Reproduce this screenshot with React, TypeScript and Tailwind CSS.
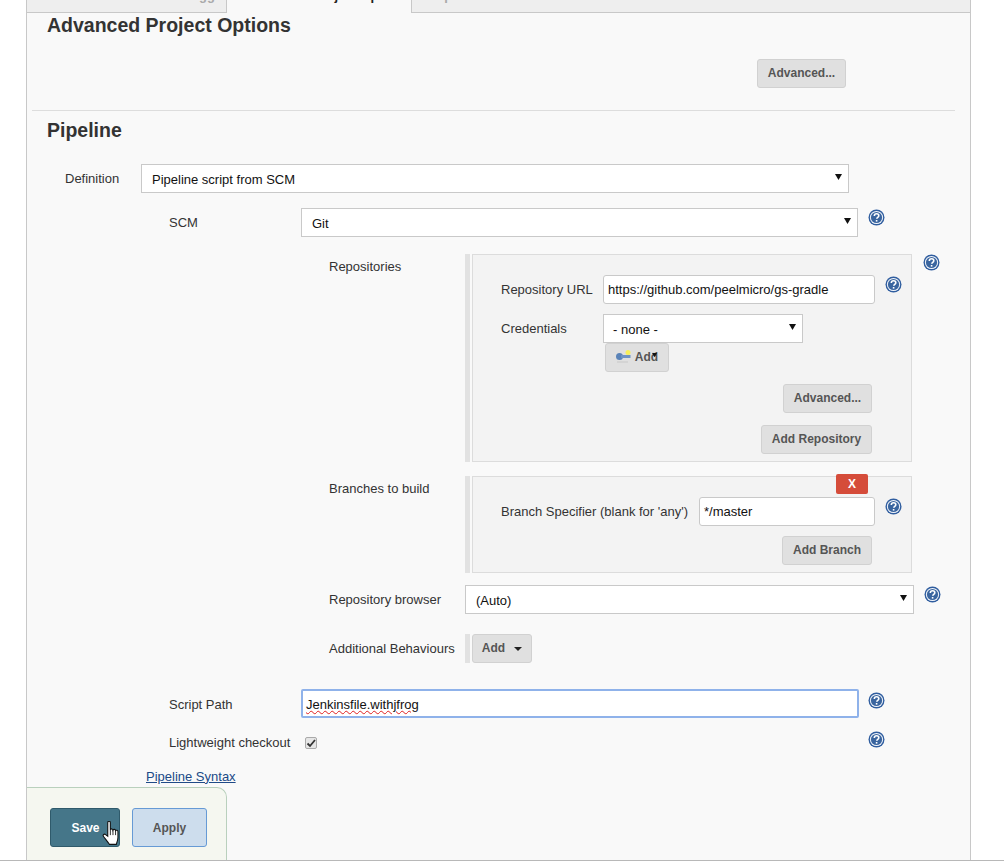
import type { ReactNode } from "react";

function Help() {
  return (
    <svg width="17" height="17" viewBox="0 0 17 17" aria-hidden className="shrink-0">
      <circle cx="8.5" cy="8.5" r="8" fill="#2f5d9f" />
      <circle cx="8.5" cy="8.5" r="6.6" fill="#f4f7fb" />
      <circle cx="8.5" cy="8.5" r="5.6" fill="#3a659f" />
      <path d="M6.3 6.9c0-1.3 1-2.1 2.3-2.1s2.2.8 2.2 1.9c0 1.7-2 1.7-2 3.1" fill="none" stroke="#fff" strokeWidth="1.6" />
      <rect x="7.8" y="11" width="1.6" height="1.6" fill="#fff" />
    </svg>
  );
}

function Caret() {
  return (
    <svg width="7" height="6" viewBox="0 0 7 6" aria-hidden className="shrink-0">
      <path d="M0 0h7L3.5 6z" fill="#111" />
    </svg>
  );
}

function Btn({ children, className = "" }: { children: ReactNode; className?: string }) {
  return (
    <div
      className={`flex h-[29px] items-center justify-center rounded-[3px] border border-[#d1d1d1] bg-[#e0e0e0] pb-[2px] text-[12px] font-bold text-[#555] ${className}`}
    >
      {children}
    </div>
  );
}

function Select({ label, className = "" }: { label: string; className?: string }) {
  return (
    <div
      className={`flex h-[29px] items-center justify-between border border-[#c9c9c9] bg-white pl-[10px] pr-[6px] text-[#111] ${className}`}
    >
      <span className="mt-[2px]">{label}</span>
      <span className="-mt-[3px]">
        <Caret />
      </span>
    </div>
  );
}

function Gutter({ children, className = "" }: { children: ReactNode; className?: string }) {
  return (
    <div className={`flex gap-[2px] ${className}`}>
      <div className="w-[5px] shrink-0 bg-[#e2e2e2]" />
      {children}
    </div>
  );
}

export default function App() {
  return (
    <div className="relative h-[863px] w-[1004px] overflow-hidden bg-white font-['Liberation_Sans',sans-serif] text-[13px] text-[#333]">
      <div className="h-[861px] border-b border-[#b8b8b8]">
        <div className="ml-[26px] h-[860px] w-[945px] overflow-hidden border-x border-x-[#c8c8c8] bg-[#f9f9f9]">
          {/* tab strip, only the bottom of the labels shows */}
          <div className="flex h-[13px] font-bold leading-[16px] whitespace-nowrap">
            <div className="h-full w-[200px] overflow-hidden border-r border-b border-[#c8c8c8] bg-[#eee] pl-[120px] text-[#aaa]">
              <div className="-mt-[12px]">Build Triggers</div>
            </div>
            <div className="h-full w-[184px] overflow-hidden bg-[#f9f9f9] pl-[20px] text-[#222]">
              <div className="-mt-[12px]">Advanced Project Options</div>
            </div>
            <div className="h-full flex-1 overflow-hidden border-l border-b border-[#c8c8c8] bg-[#eee] pl-[20px] text-[#aaa]">
              <div className="-mt-[12px]">Pipeline</div>
            </div>
          </div>

          <div className="pl-[20px] pt-[1px]">
            <h2 className="text-[19.5px] leading-[23px] font-bold text-[#333]">Advanced Project Options</h2>
          </div>
          <div className="flex justify-end pr-[124px] pt-[22px]">
            <Btn className="w-[89px]">Advanced...</Btn>
          </div>
          <div className="ml-[5px] mr-[15px] mt-[22px] border-t border-[#ddd]" />
          <h2 className="pl-[20px] pt-[8px] text-[19.5px] leading-[23px] font-bold text-[#333]">Pipeline</h2>

          <div className="mt-[22px] flex items-center pl-[38px]">
            <span className="w-[76px]">Definition</span>
            <Select label="Pipeline script from SCM" className="w-[708px]" />
          </div>

          <div className="mt-[15px] flex pl-[142px]">
            <span className="w-[132px] pt-[5px]">SCM</span>
            <Select label="Git" className="w-[557px]" />
            <span className="ml-[10px] mt-[1px]">
              <Help />
            </span>
          </div>

          {/* Repositories */}
          <div className="mt-[17px] flex pl-[302px]">
            <span className="w-[136px] pt-[3px]">Repositories</span>
            <Gutter className="h-[208px]">
              <div className="w-[440px] border border-[#dcdcdc] bg-[#f3f3f3] pl-[28px] pr-[39px] pt-[20px]">
                <div className="flex items-center">
                  <span className="w-[102px] whitespace-nowrap">Repository URL</span>
                  <div className="flex h-[29px] w-[272px] items-center rounded-[3px] border border-[#c9c9c9] bg-white pl-[4px] text-[#111]">
                    https://github.com/peelmicro/gs-gradle
                  </div>
                  <span className="ml-[10px] -mr-[30px] -mt-[11px]">
                    <Help />
                  </span>
                </div>
                <div className="mt-[10px] flex">
                  <span className="w-[102px] pt-[5px]">Credentials</span>
                  <Select label="- none -" className="w-[200px] !pl-[9px]" />
                </div>
                <div className="pl-[104px]">
                  <Btn className="w-[64px] gap-[4px]">
                    <svg width="15" height="13" viewBox="0 0 15 13" aria-hidden>
                      <circle cx="3.5" cy="6.5" r="3.5" fill="#5a83b8" />
                      <rect x="5" y="5" width="9.5" height="3" fill="#6d93c4" />
                      <circle cx="12" cy="2.5" r="2.5" fill="#f7f05a" />
                      <rect x="1" y="11.5" width="11" height="1" fill="#c8c8c8" />
                    </svg>
                    <span className="relative">
                      Add
                      <span className="absolute right-[0px] top-[4px] scale-75">
                        <Caret />
                      </span>
                    </span>
                  </Btn>
                </div>
                <div className="mt-[12px] flex justify-end">
                  <Btn className="w-[89px]">Advanced...</Btn>
                </div>
                <div className="mt-[12px] flex justify-end">
                  <Btn className="w-[111px]">Add Repository</Btn>
                </div>
              </div>
              <span className="ml-[9px]">
                <Help />
              </span>
            </Gutter>
          </div>

          {/* Branches */}
          <div className="mt-[14px] flex pl-[302px]">
            <span className="w-[136px] pt-[3px]">Branches to build</span>
            <Gutter className="h-[97px]">
              <div className="relative w-[440px] border border-[#dcdcdc] bg-[#f3f3f3] pl-[28px] pr-[39px] pt-[20px]">
                <div className="absolute right-[43px] top-[-3px] flex h-[20px] w-[32px] items-center justify-center rounded-[2px] bg-[#d54c3a] text-[12px] font-bold text-white">
                  X
                </div>
                <div className="flex items-center">
                  <span className="w-[198px] whitespace-nowrap">Branch Specifier (blank for 'any')</span>
                  <div className="flex h-[29px] w-[176px] items-center rounded-[3px] border border-[#c9c9c9] bg-white pl-[4px] text-[#111]">
                    */master
                  </div>
                  <span className="ml-[10px] -mr-[30px] -mt-[11px]">
                    <Help />
                  </span>
                </div>
                <div className="mt-[10px] flex justify-end">
                  <Btn className="w-[90px]">Add Branch</Btn>
                </div>
              </div>
            </Gutter>
          </div>

          <div className="mt-[12px] flex pl-[302px]">
            <span className="w-[136px] pt-[5px]">Repository browser</span>
            <Select label="(Auto)" className="w-[449px]" />
            <span className="ml-[10px] mt-[1px]">
              <Help />
            </span>
          </div>

          <div className="mt-[20px] flex pl-[302px]">
            <span className="w-[136px] whitespace-nowrap pt-[5px]">Additional Behaviours</span>
            <Gutter>
              <Btn className="w-[60px] gap-[9px]">
                Add
                <svg width="8" height="4" viewBox="0 0 8 4" aria-hidden className="mt-[2px]">
                  <path d="M0 0h8L4 4z" fill="#222" />
                </svg>
              </Btn>
            </Gutter>
          </div>

          <div className="mt-[26px] flex items-center pl-[142px]">
            <span className="mt-[2px] w-[132px]">Script Path</span>
            <div className="flex h-[29px] w-[558px] items-center rounded-[2px] border-2 border-[#8fb2ea] bg-white pl-[3px] text-[#111]">
              <span className="mt-[2px] underline decoration-wavy decoration-[#e02020] decoration-1">Jenkinsfile.withjfrog</span>
            </div>
            <span className="ml-[9px] -mt-[7px]">
              <Help />
            </span>
          </div>

          <div className="mt-[15px] flex items-center pl-[142px]">
            <span className="w-[136px] whitespace-nowrap">Lightweight checkout</span>
            <div className="flex h-[12px] w-[12px] items-center justify-center rounded-[2px] border border-[#aaa] bg-[#e6e6e6]">
              <svg width="10" height="10" viewBox="0 0 10 10" aria-hidden>
                <path d="M1.5 5.5l2.5 2.5 5-6" fill="none" stroke="#333" strokeWidth="1.8" />
              </svg>
            </div>
            <span className="ml-[551px] -mt-[7px]">
              <Help />
            </span>
          </div>

          <div className="mt-[14px] pl-[119px]">
            <span className="text-[#204a87] underline">Pipeline Syntax</span>
          </div>
        </div>
      </div>

      {/* sticky save bar */}
      <div className="absolute left-[27px] top-[787px] flex h-[73px] w-[200px] gap-[12px] rounded-tr-[10px] border-t border-r border-[#b9d0bd] bg-[#f5f7f0] pl-[23px] pt-[20px]">
        <div className="relative flex h-[39px] w-[70px] items-center justify-center rounded-[3px] border border-[#2f5a6b] bg-[#457689] pl-[1px] text-[12px] font-bold text-white">
          Save
          <svg width="18" height="25" viewBox="0 1 16 23" aria-hidden className="absolute left-[51px] top-[12px]">
            <path d="M5 2.5c0-1.6 2.4-1.6 2.4 0V9c.4-1 2.4-1 2.4.3.5-.9 2.3-.8 2.4.5.7-.6 2.2-.3 2.2 1v5.4c0 3-1.5 5.3-1.5 6.3H6.5c-1-2-4.5-6-5.5-7.5-.8-1.2.8-2.6 2-1.4L5 15z" fill="#fff" stroke="#111" strokeWidth="1" />
            <path d="M7.4 9v5M9.8 9.3V14M12.2 9.8V14" stroke="#111" strokeWidth="0.8" />
          </svg>
        </div>
        <div className="flex h-[39px] w-[75px] items-center justify-center rounded-[3px] border border-[#669ad5] bg-[#cddded] text-[12px] font-bold text-[#555]">
          Apply
        </div>
      </div>
    </div>
  );
}
